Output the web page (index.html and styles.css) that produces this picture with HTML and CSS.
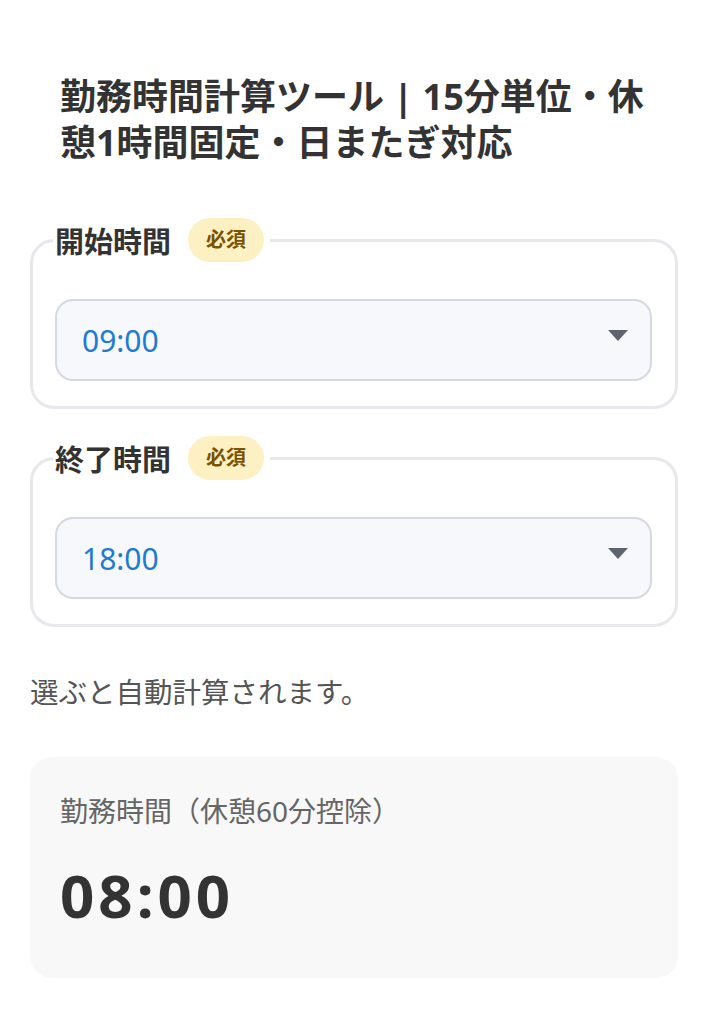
FILE: index.html
```html
<!DOCTYPE html>
<html lang="ja">
<head>
  <meta charset="UTF-8" />
  <title>勤務時間計算ツール</title>
  <link rel="stylesheet" href="styles.css">
</head>
<body>

<div class="container">
  <h1>勤務時間計算ツール | 15分単位・休憩1時間固定・日またぎ対応</h1>

  <fieldset class="field">
    <legend>開始時間 <span class="badge">必須</span></legend>
    <div class="select-wrap">
      <select id="start">
        <option>08:00</option>
        <option selected>09:00</option>
        <option>10:00</option>
      </select>
      <svg class="arrow" width="20" height="11" viewBox="0 0 20 11"><path d="M0 0 H20 L10 11 Z" fill="#5f6370"/></svg>
    </div>
  </fieldset>

  <fieldset class="field">
    <legend>終了時間 <span class="badge">必須</span></legend>
    <div class="select-wrap">
      <select id="end">
        <option>17:00</option>
        <option selected>18:00</option>
        <option>19:00</option>
      </select>
      <svg class="arrow" width="20" height="11" viewBox="0 0 20 11"><path d="M0 0 H20 L10 11 Z" fill="#5f6370"/></svg>
    </div>
  </fieldset>

  <p class="note">選ぶと自動計算されます。</p>

  <div class="result">
    <div class="result-label">勤務時間（休憩60分控除）</div>
    <div class="result-value" id="result">08:00</div>
  </div>
</div>

</body>
</html>
```

FILE: styles.css
```css
body {
  font-family: "Noto Sans", "Noto Sans CJK JP", sans-serif;
  margin: 0;
  padding: 0;
  background: #fff;
  color: #333;
}

.container {
  padding: 60px 30px 40px;
}

h1 {
  font-size: 36px;
  line-height: 46px;
  font-weight: bold;
  margin: 14px 20px 52px 30px;
  color: #333;
}

.field {
  border: 3px solid #e8e8ec;
  border-radius: 24px;
  margin: 0 0 27px;
  padding: 37px 23px 25px 22px;
}

.field legend {
  font-size: 29px;
  font-weight: bold;
  padding: 0 2px;
  margin-left: -2px;
  display: flex;
  align-items: center;
  gap: 17px;
}

.badge {
  display: inline-block;
  background: #fdf0c2;
  color: #7a5200;
  font-size: 20px;
  font-weight: bold;
  padding: 0 18px;
  height: 44px;
  line-height: 44px;
  border-radius: 22px;
  margin-right: 4px;
}

.select-wrap {
  position: relative;
}

.select-wrap select {
  appearance: none;
  -webkit-appearance: none;
  width: 100%;
  height: 82px;
  border: 2px solid #d6d9df;
  border-radius: 18px;
  background: #f6f8fb;
  color: #1f7ad1;
  font-family: inherit;
  font-size: 30px;
  padding: 0 25px;
  outline: none;
}

.select-wrap .arrow {
  position: absolute;
  right: 24px;
  top: 31px;
  pointer-events: none;
}

.note {
  font-size: 28.5px;
  color: #555;
  margin: 43px 0 46px;
}

.result {
  background: #f8f8f8;
  border-radius: 22px;
  padding: 33px 30px 42px;
}

.result-label {
  font-size: 28px;
  color: #666;
}

.result-value {
  font-size: 60px;
  font-weight: bold;
  color: #333;
  margin-top: 24px;
  letter-spacing: 4px;
}
```
